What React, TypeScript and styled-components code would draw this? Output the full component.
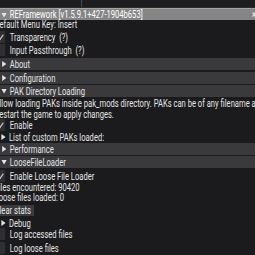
import React from "react";
import styled, { createGlobalStyle } from "styled-components";

const Global = createGlobalStyle`
  html, body {
    margin: 0;
    padding: 0;
    background: #1b1b1d;
    overflow: hidden;
  }
  body {
    font-family: Roboto, "Liberation Sans", sans-serif;
    font-size: 10px;
    color: #e4e4e4;
  }
`;

const Page = styled.div`
  width: 255px;
  height: 255px;
  overflow: hidden;
  display: flex;
  flex-direction: column;
`;

const TopStrip = styled.div`
  height: 7px;
  flex-shrink: 0;
  display: flex;
  background: #1d1d1f;
  border-bottom: 1px solid #2a2a2c;
`;

const StripPane = styled.div<{ $w: number }>`
  width: ${(p) => p.$w}px;
  border-right: 1px solid #4a4a4c;
`;

/* the capture is squeezed sideways, so the window is drawn wide and scaled back */
const Window = styled.div`
  margin-left: -10px;
  width: 352px;
  flex-shrink: 0;
  transform: scaleX(0.76);
  transform-origin: 0 0;
  display: flex;
  flex-direction: column;
`;

const TitleBar = styled.div`
  height: 11px;
  display: flex;
  align-items: center;
  background: #858585;
  border-top: 1px solid #a2a2a2;
  padding: 0 2px 0 15px;
  gap: 4px;
  color: #fff;
  white-space: nowrap;
`;

const Close = styled.span`
  margin-left: auto;
  font-size: 10px;
`;

const Body = styled.div`
  padding-left: 6px;
  display: flex;
  flex-direction: column;
`;

const Text = styled.div<{ $top?: number }>`
  height: 10px;
  line-height: 10px;
  white-space: nowrap;
  margin-top: ${(p) => p.$top ?? 0}px;
`;

const Wrapped = styled.div`
  margin-top: 1px;
  line-height: 11px;
  white-space: nowrap;
`;

const CheckRow = styled.div<{ $top?: number }>`
  height: 12px;
  display: flex;
  align-items: center;
  gap: 6px;
  margin-top: ${(p) => p.$top ?? 0}px;
  white-space: nowrap;
`;

const Box = styled.div`
  width: 14px;
  height: 12px;
  background: #2f2f32;
  display: flex;
  align-items: center;
  justify-content: center;
`;

const Header = styled.div<{ $top?: number }>`
  height: 12px;
  display: flex;
  align-items: center;
  gap: 4px;
  background: #3a3a3d;
  padding-left: 15px;
  margin-left: -6px;
  margin-top: ${(p) => p.$top ?? 0}px;
  white-space: nowrap;
`;

const TreeNode = styled.div<{ $top?: number }>`
  height: 10px;
  display: flex;
  align-items: center;
  gap: 4px;
  padding-left: 8px;
  margin-top: ${(p) => p.$top ?? 0}px;
  white-space: nowrap;
`;

const Button = styled.div`
  align-self: flex-start;
  margin-top: 2px;
  height: 11px;
  line-height: 11px;
  padding: 0 4px 0 0;
  background: #3a3a3d;
`;

const Arrow = ({ open }: { open?: boolean }) =>
  open ? (
    <svg width="7" height="6" viewBox="0 0 7 6">
      <polygon points="0,1 7,1 3.5,5.5" fill="#e4e4e4" />
    </svg>
  ) : (
    <svg width="7" height="6" viewBox="0 0 7 6">
      <polygon points="1,0 6.5,3 1,6" fill="#e4e4e4" />
    </svg>
  );

const Check = ({ on }: { on?: boolean }) => (
  <Box>
    {on && (
      <svg width="11" height="9" viewBox="0 0 11 9">
        <polyline points="2,4.8 4.6,7 9.5,1.8" fill="none" stroke="#cfcfcf" strokeWidth="1.4" />
      </svg>
    )}
  </Box>
);

export default function App() {
  return (
    <Page>
      <Global />
      <TopStrip>
        <StripPane $w={81} />
      </TopStrip>
      <Window>
        <TitleBar>
          <Arrow open />
          <span>REFramework [v1.5.9.1+427-1904b653]</span>
          <Close>×</Close>
        </TitleBar>
        <Body>
          <Text>Default Menu Key: Insert</Text>
          <CheckRow $top={1}>
            <Check on />
            <span>Transparency&nbsp;&nbsp;(?)</span>
          </CheckRow>
          <CheckRow $top={1}>
            <Check />
            <span>Input Passthrough&nbsp;&nbsp;(?)</span>
          </CheckRow>
          <Header $top={2}>
            <Arrow />
            <span>About</span>
          </Header>
          <Header $top={2}>
            <Arrow />
            <span>Configuration</span>
          </Header>
          <Header $top={1}>
            <Arrow open />
            <span>PAK Directory Loading</span>
          </Header>
          <Wrapped>
            Allow loading PAKs inside pak_mods directory. PAKs can be of any filename and
            <br />
            Restart the game to apply changes.
          </Wrapped>
          <CheckRow $top={-1}>
            <Check on />
            <span>Enable</span>
          </CheckRow>
          <TreeNode $top={1}>
            <Arrow />
            <span>List of custom PAKs loaded:</span>
          </TreeNode>
          <Header $top={1}>
            <Arrow />
            <span>Performance</span>
          </Header>
          <Header $top={1}>
            <Arrow open />
            <span>LooseFileLoader</span>
          </Header>
          <CheckRow $top={2}>
            <Check on />
            <span>Enable Loose File Loader</span>
          </CheckRow>
          <Text $top={1}>Files encountered: 90420</Text>
          <Text>Loose files loaded: 0</Text>
          <Button>Clear stats</Button>
          <TreeNode $top={2}>
            <Arrow />
            <span>Debug</span>
          </TreeNode>
          <CheckRow>
            <Check />
            <span>Log accessed files</span>
          </CheckRow>
          <CheckRow $top={2}>
            <Check />
            <span>Log loose files</span>
          </CheckRow>
        </Body>
      </Window>
    </Page>
  );
}
